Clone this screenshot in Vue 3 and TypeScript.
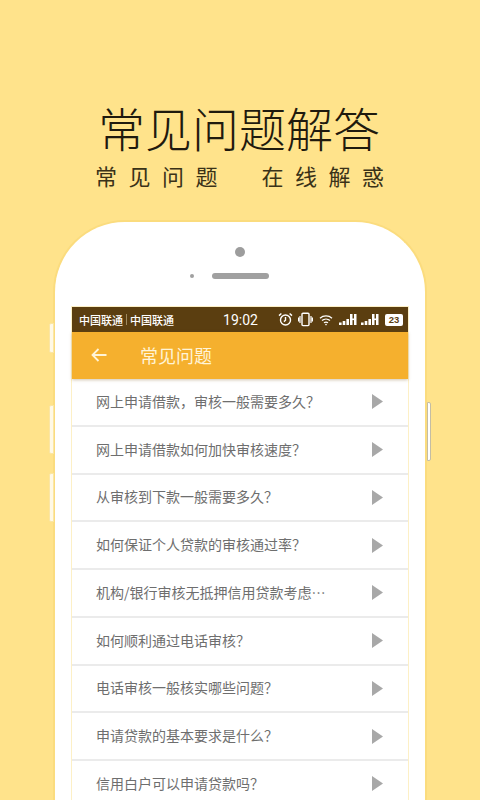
<script setup lang="ts">
const questions: string[] = [
  '网上申请借款，审核一般需要多久？',
  '网上申请借款如何加快审核速度？',
  '从审核到下款一般需要多久？',
  '如何保证个人贷款的审核通过率？',
  '机构/银行审核无抵押信用贷款考虑…',
  '如何顺利通过电话审核？',
  '电话审核一般核实哪些问题？',
  '申请贷款的基本要求是什么？',
  '信用白户可以申请贷款吗？',
]
</script>

<template>
  <div class="page">
    <header class="hero">
      <h1 class="title">常见问题解答</h1>
      <p class="sub"><span>常见问题</span><span>在线解惑</span></p>
    </header>
    <div class="phone">
      <i class="side side-l1"></i>
      <i class="side side-l2"></i>
      <i class="side side-l3"></i>
      <i class="side side-r"></i>
      <div class="bezel">
        <div class="camera"></div>
        <div class="speaker-row">
          <div class="sensor"></div>
          <div class="speaker"></div>
        </div>
      </div>
      <div class="screen">
        <div class="status">
          <div class="carriers"><span>中国联通</span><i class="sep"></i><span>中国联通</span></div>
          <div class="time">19:02</div>
          <div class="icons">
            <svg width="15" height="15" viewBox="0 0 15 15" fill="none" stroke="#fff" stroke-width="1.4">
              <circle cx="7.5" cy="8" r="5" />
              <path d="M7.5 5v3.2l-1.6 1.4M1 3.6 3.4 1.5M14 3.6 11.6 1.5" />
            </svg>
            <svg width="15" height="15" viewBox="0 0 15 15" fill="none" stroke="#fff" stroke-width="1.2">
              <rect x="4" y="1.2" width="7" height="12.4" rx="1" stroke-width="1.4" />
              <path d="M2 4v7M.6 5.500v4M13 4v7M14.400 5.500v4" />
            </svg>
            <svg class="wifi" width="14" height="12" viewBox="0 0 14 12" fill="none" stroke="#fff" stroke-width="1.3">
              <path d="M1 4.200c3.400-3 8.600-3 12 0M3 6.600c2.300-2 5.700-2 8 0M5 8.800c1.200-.9 2.800-.9 4 0" />
              <circle cx="7" cy="10.600" r=".8" fill="#fff" stroke="none" />
            </svg>
            <svg v-for="n in 2" :key="n" class="signal" width="18" height="13" viewBox="0 0 18 13" fill="#fff">
              <rect x="0" y="9.500" width="2.600" height="2.500" />
              <rect x="3.700" y="8" width="2.600" height="4" />
              <rect x="7.400" y="6" width="2.600" height="6" />
              <rect x="11" y="1" width="2.500" height="11" />
              <rect x="15" y="1" width="2.500" height="11" />
              <rect x="12.500" y="5.500" width="3" height="1.600" />
            </svg>
            <div class="battery">23</div>
          </div>
        </div>
        <div class="appbar">
          <svg class="back" width="16" height="14" viewBox="0 0 16 14" fill="none" stroke="#fff4d8" stroke-width="1.800">
            <path d="M15.500 7H1.500M7.500 1 1.500 7l6 6" />
          </svg>
          <span class="appbar-title">常见问题</span>
        </div>
        <ul class="list">
          <li v-for="q in questions" :key="q" class="row">
            <span class="q">{{ q }}</span>
            <svg class="arrow" width="11" height="15" viewBox="0 0 11 15"><path d="M0 0 11 7.500 0 15Z" fill="#a8a8a8" /></svg>
          </li>
        </ul>
      </div>
    </div>
  </div>
</template>

<style scoped>
.page {
  height: 800px;
  overflow: hidden;
  background: #ffe38b;
  font-family: "Noto Sans CJK SC", "Noto Sans", sans-serif;
  display: flex;
  flex-direction: column;
  align-items: center;
}
.hero {
  padding-top: 95px;
  height: 220px;
  box-sizing: border-box;
  display: flex;
  flex-direction: column;
  align-items: center;
  flex: none;
}
.title {
  margin: 0 2px 0 0;
  font-size: 47px;
  line-height: 64px;
  font-weight: 300;
  color: #1f1a0e;
  white-space: nowrap;
}
.sub {
  margin: 1px 0 0;
  width: 292px;
  display: flex;
  justify-content: space-between;
  font-size: 22px;
  line-height: 30px;
  letter-spacing: 11.500px;
  color: #3a3218;
  white-space: nowrap;
  padding: 0 2px 0 1px;
  box-sizing: border-box;
}
.sub span { margin-right: -11.500px; }
.phone {
  position: relative;
  flex: none;
  width: 374px;
  height: 700px;
  box-sizing: border-box;
  background: #fff;
  border: 2px solid #fbdc7e;
  border-bottom: none;
  border-radius: 72px 72px 0 0;
  padding: 0 17px;
}
.side {
  position: absolute;
  background: #fff9e6;
  border: 1px solid #fbe6a4;
  box-sizing: border-box;
}
.side-l1 { left: -6px; top: 101px; width: 5px; height: 30px; border-radius: 2px 0 0 2px; }
.side-l2 { left: -6px; top: 183px; width: 5px; height: 49px; border-radius: 2px 0 0 2px; }
.side-l3 { left: -6px; top: 251px; width: 5px; height: 49px; border-radius: 2px 0 0 2px; }
.side-r { right: -6px; top: 180px; width: 4px; height: 59px; background: #fff; border: 1px solid #c4bda4; border-radius: 0 2px 2px 0; }
.bezel {
  height: 85px;
  display: flex;
  flex-direction: column;
  align-items: center;
  padding-top: 25px;
  box-sizing: border-box;
}
.camera {
  width: 10px;
  height: 10px;
  border-radius: 50%;
  background: #9d9d9d;
}
.speaker-row {
  position: relative;
  margin-top: 16px;
}
.speaker {
  width: 57px;
  height: 6px;
  border-radius: 3px;
  background: #a0a0a0;
}
.sensor {
  position: absolute;
  left: -22px;
  top: 1px;
  width: 4px;
  height: 4px;
  border-radius: 50%;
  background: #a0a0a0;
}
.screen {
  width: 336px;
  box-shadow: 0 0 0 1px #fdf0c6;
}
.status {
  height: 25px;
  background: #5b3e10;
  display: grid;
  grid-template-columns: 1fr auto 1fr;
  align-items: center;
  padding: 0 5px 0 7px;
  color: #fff;
}
.carriers {
  display: flex;
  align-items: center;
  font-size: 11px;
  font-weight: 500;
  white-space: nowrap;
}
.sep {
  width: 1px;
  height: 11px;
  margin: 0 3px;
  background: #a08a60;
}
.time {
  font-family: Roboto, sans-serif;
  font-size: 14px;
  padding-right: 1px;
}
.icons {
  display: flex;
  align-items: center;
  justify-content: flex-end;
  gap: 5px;
}
.wifi { margin-left: 1px; margin-right: 1px; }
.signal { margin-right: -1px; }
.battery {
  width: 18px;
  height: 12px;
  margin-left: 2px;
  border-radius: 2px;
  background: #fff;
  color: #5b3e10;
  font-family: "Liberation Sans", sans-serif;
  font-size: 9.500px;
  font-weight: 700;
  line-height: 12px;
  text-align: center;
}
.appbar {
  height: 47px;
  background: #f5b02e;
  display: flex;
  align-items: center;
  padding-left: 19px;
  box-shadow: 0 1px 3px rgba(120, 90, 30, 0.35);
  position: relative;
}
.appbar-title {
  margin-left: 33px;
  margin-top: -2px;
  font-size: 18px;
  color: #fff4d8;
  white-space: nowrap;
}
.back { margin-top: -1px; }
.list {
  list-style: none;
  margin: 0;
  padding: 0;
}
.row {
  height: 47.750px;
  box-sizing: border-box;
  border-bottom: 2px solid #ebebeb;
  display: flex;
  align-items: center;
  justify-content: space-between;
  padding: 0 25px 0 24px;
  background: #fff;
}
.q {
  font-size: 14px;
  line-height: 20px;
  margin-top: -2px;
  color: #6e6e6e;
  white-space: nowrap;
}
.arrow { flex: none; margin-top: 0; }
</style>
